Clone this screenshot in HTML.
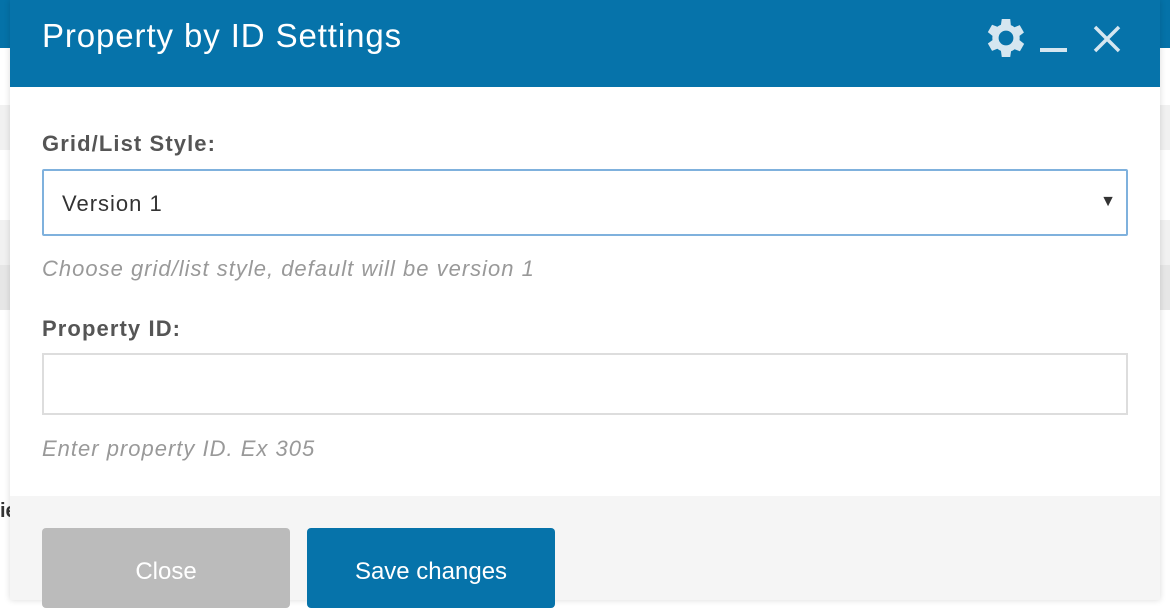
<!DOCTYPE html>
<html><head><style>
body{margin:0;width:1170px;height:600px;overflow:hidden;background:#fff;font-family:"Liberation Sans",sans-serif;position:relative}
.bg1{position:absolute;left:0;top:0;width:1170px;height:48px;background:#0572a8}
.band{position:absolute;left:0;width:1170px;background:#f1f1f1}
.modal{position:absolute;left:10px;top:0;width:1150px;height:600px;background:#fff;box-shadow:0 0 6px rgba(0,0,0,.15)}
.hd{height:87px;background:#0673aa;color:#fff;font-size:33px;line-height:72px;padding-left:32px;position:relative;letter-spacing:0.9px}
.lbl{position:absolute;left:32px;font-size:22px;font-weight:bold;color:#555;letter-spacing:1.1px}
.box{position:absolute;left:32px;width:1086px;height:62px;border:1px solid #ddd;box-sizing:border-box;background:#fff}
.hint{position:absolute;left:32px;font-size:22px;font-style:italic;color:#999;letter-spacing:1px}
.ft{position:absolute;left:0;top:496px;width:1150px;height:104px;background:#f5f5f5}
.btn{position:absolute;top:528px;width:248px;height:80px;border-radius:4px;color:#fff;font-size:24px;text-align:center;line-height:88px}
</style></head><body>
<div class="bg1"></div>
<div class="band" style="top:105px;height:45px"></div>
<div class="band" style="top:220px;height:45px"></div>
<div class="band" style="top:265px;height:45px;background:#e6e6e6"></div>
<div style="position:absolute;left:0;top:500px;font-size:20px;font-weight:bold;color:#333">ie</div>
<div class="modal">
<div class="hd">Property by ID Settings
<svg style="position:absolute;left:977px;top:19px" width="38" height="38" viewBox="4 3 18 18"><path fill="#d5e6f0" d="M19.4 13a7.5 7.5 0 0 0 0-2l2.1-1.6-2-3.5-2.5 1a7.3 7.3 0 0 0-1.7-1L15 3h-4l-.4 2.7a7.3 7.3 0 0 0-1.7 1l-2.5-1-2 3.5L6.6 11a7.5 7.5 0 0 0 0 2l-2.2 1.6 2 3.5 2.5-1a7.3 7.3 0 0 0 1.7 1L11 21h4l.4-2.7a7.3 7.3 0 0 0 1.7-1l2.5 1 2-3.5zM13 15.5a3.5 3.5 0 1 1 0-7 3.5 3.5 0 0 1 0 7z"/></svg>
<div style="position:absolute;left:1030px;top:48px;width:27px;height:4px;background:#d5e6f0"></div>
<svg style="position:absolute;left:1082px;top:25px" width="30" height="28" viewBox="0 0 30 28"><path d="M3 2L27 26M27 2L3 26" stroke="#d5e6f0" stroke-width="3.5"/></svg>
</div>
<div class="lbl" style="top:131px">Grid/List Style:</div>
<div class="box" style="top:169px;height:67px;border:2px solid #7fb1dd;border-radius:2px"><span style="position:absolute;left:18px;top:20px;font-size:22px;color:#333;letter-spacing:1px">Version 1</span><span style="position:absolute;right:10px;top:22px;font-size:16px;color:#333">▼</span></div>
<div class="hint" style="top:256px">Choose grid/list style, default will be version 1</div>
<div class="lbl" style="top:316px">Property ID:</div>
<div class="box" style="top:353px;border:2px solid #ddd"></div>
<div class="hint" style="top:436px">Enter property ID. Ex 305</div>
<div class="ft"></div>
<div class="btn" style="left:32px;background:#bbb">Close</div>
<div class="btn" style="left:297px;background:#0673aa">Save changes</div>
</div>
</body></html>
